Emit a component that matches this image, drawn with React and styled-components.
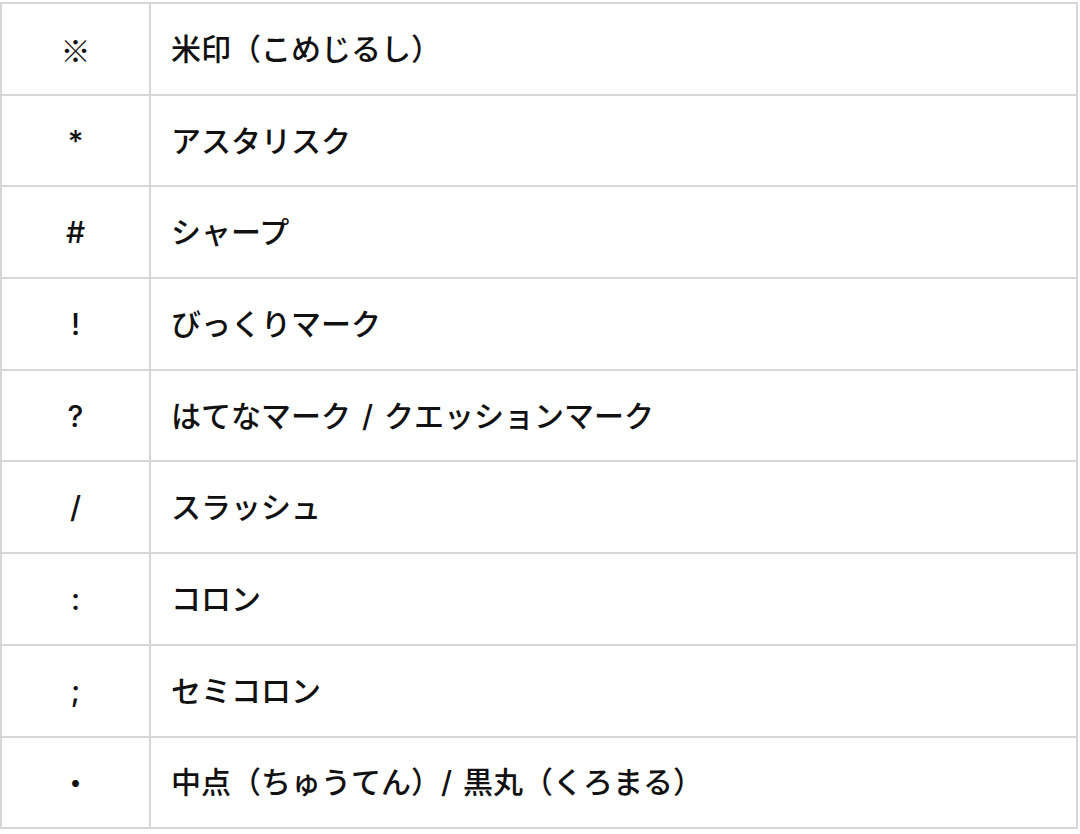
import React from "react";
import styled, { createGlobalStyle } from "styled-components";

const rows = [
  { symbol: "※", name: "米印（こめじるし）", cjk: true },
  { symbol: "*", name: "アスタリスク" },
  { symbol: "#", name: "シャープ" },
  { symbol: "!", name: "びっくりマーク" },
  { symbol: "?", name: "はてなマーク / クエッションマーク" },
  { symbol: "/", name: "スラッシュ" },
  { symbol: ":", name: "コロン" },
  { symbol: ";", name: "セミコロン" },
  { symbol: "・", name: "中点（ちゅうてん）/ 黒丸（くろまる）", cjk: true },
];

const App = () => {
  return (
    <Page>
      <GlobalStyle />
      <Table>
        <tbody>
          {rows.map((row) => (
            <Row key={row.symbol}>
              <SymbolCell $cjk={row.cjk}>{row.symbol}</SymbolCell>
              <NameCell>{row.name}</NameCell>
            </Row>
          ))}
        </tbody>
      </Table>
    </Page>
  );
};

export default App;

const GlobalStyle = createGlobalStyle`
  html, body {
    margin: 0;
    background: #ffffff;
  }
  body {
    font-family: Inter, "Noto Sans CJK JP", sans-serif;
    color: #111111;
  }
`;

const Page = styled.div`
  padding-top: 2px;
  width: 1080px;
`;

const Table = styled.table`
  width: 1078px;
  border-collapse: collapse;
  table-layout: fixed;
`;

const Row = styled.tr`
  height: 91.7px;
`;

const Cell = styled.td`
  border: 2px solid #d6d6d6;
  font-size: 30px;
  font-weight: 500;
  line-height: 1;
  padding: 0;
  vertical-align: middle;
`;

const SymbolCell = styled(Cell)`
  width: 147px;
  text-align: center;
  font-family: ${(p) =>
    p.$cjk ? `"Noto Sans CJK JP", sans-serif` : `Inter, "Noto Sans CJK JP", sans-serif`};
`;

const NameCell = styled(Cell)`
  padding-left: 20px;
  text-align: left;
  word-spacing: 3px;
`;
